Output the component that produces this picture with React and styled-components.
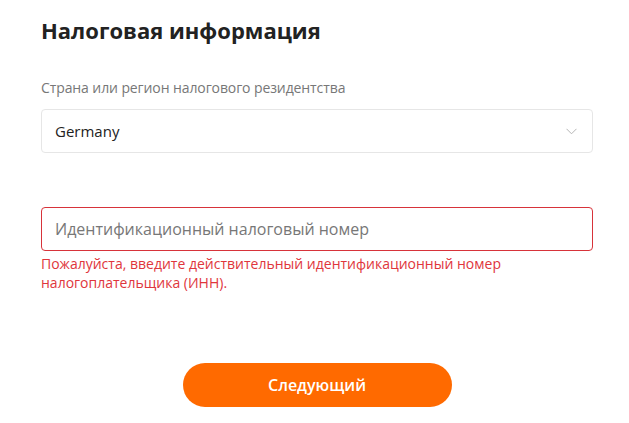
import React from 'react';
import styled, { createGlobalStyle } from 'styled-components';

const GlobalStyle = createGlobalStyle`
    html, body {
        margin: 0;
        padding: 0;
        background: #fff;
    }
    body {
        font-family: "Open Sans", "Noto Sans", Arial, sans-serif;
        color: #222;
    }
`

const Page = styled.div`
    width: 629px;
    box-sizing: border-box;
    padding: 14px 36px 0 41px;
`

const Title = styled.h1`
    margin: 0;
    font-size: 22px;
    line-height: 32px;
    font-weight: 700;
    color: #222;
`

const Field = styled.div`
    margin-top: ${(props) => props.top}px;
`

const Label = styled.div`
    font-size: 14px;
    line-height: 18px;
    color: #777;
    margin-bottom: 12px;
    letter-spacing: -0.1px;
`

const Box = styled.div`
    height: 44px;
    box-sizing: border-box;
    border: 1px solid ${(props) => (props.error ? '#d7333a' : '#e6e6e6')};
    border-radius: 4px;
    display: flex;
    align-items: center;
    justify-content: space-between;
    padding: 0 14px 0 13px;
`

const Value = styled.span`
    font-size: 15px;
    color: #222;
`

const Placeholder = styled.span`
    font-size: 16px;
    color: #777;
`

const Chevron = styled.svg`
    width: 11px;
    height: 7px;
    margin-right: 1px;
`

const ErrorText = styled.div`
    margin-top: 3px;
    font-size: 14px;
    line-height: 19px;
    color: #e0363c;
    padding-right: 20px;
`

const Actions = styled.div`
    display: flex;
    justify-content: center;
    margin-top: 71px;
`

const NextButton = styled.button`
    width: 269px;
    height: 44px;
    border: none;
    border-radius: 22px;
    background: #ff6a00;
    color: #fff;
    font-family: inherit;
    font-size: 16px;
    font-weight: 600;
    cursor: pointer;
`

const App = () => {
    return (
        <>
            <GlobalStyle />
            <Page>
                <Title>Налоговая информация</Title>
                <Field top={33}>
                    <Label>Страна или регион налогового резидентства</Label>
                    <Box>
                        <Value>Germany</Value>
                        <Chevron viewBox="0 0 11 7">
                            <path d="M0.5 0.8 L5.5 5.8 L10.5 0.8" fill="none" stroke="#b5b5b5" strokeWidth="1" />
                        </Chevron>
                    </Box>
                </Field>
                <Field top={54}>
                    <Box error>
                        <Placeholder>Идентификационный налоговый номер</Placeholder>
                    </Box>
                    <ErrorText>
                        Пожалуйста, введите действительный идентификационный номер налогоплательщика (ИНН).
                    </ErrorText>
                </Field>
                <Actions>
                    <NextButton>Следующий</NextButton>
                </Actions>
            </Page>
        </>
    );
}

export default App;
